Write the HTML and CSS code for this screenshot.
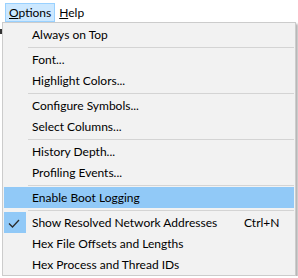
FILE: index.html
```html
<!DOCTYPE html>
<html lang="en">
<head>
  <meta charset="UTF-8">
  <title>Options Menu</title>
  <link rel="stylesheet" href="styles.css">
</head>
<body>
  <div class="menubar">
    <div class="menubar-item open"><u>O</u>ptions</div>
    <div class="menubar-item"><u>H</u>elp</div>
  </div>

  <div class="desk">
    <div class="desk-edge"><span class="edge-mark"></span></div>

    <div class="dropdown">
      <div class="item"><span class="label">Always on Top</span></div>
      <div class="sep"></div>
      <div class="item"><span class="label">Font...</span></div>
      <div class="item"><span class="label">Highlight Colors...</span></div>
      <div class="sep"></div>
      <div class="item"><span class="label">Configure Symbols...</span></div>
      <div class="item"><span class="label">Select Columns...</span></div>
      <div class="sep"></div>
      <div class="item"><span class="label">History Depth...</span></div>
      <div class="item"><span class="label">Profiling Events...</span></div>
      <div class="sep"></div>
      <div class="item hover"><span class="label">Enable Boot Logging</span></div>
      <div class="sep"></div>
      <div class="item checked">
        <span class="check">
          <svg width="22" height="21" viewBox="0 0 22 21">
            <polyline points="5,11.5 8.5,15 15,8" fill="none" stroke="#2b2b2b" stroke-width="1.3"/>
          </svg>
        </span>
        <span class="label">Show Resolved Network Addresses</span>
        <span class="shortcut">Ctrl+N</span>
      </div>
      <div class="item"><span class="label">Hex File Offsets and Lengths</span></div>
      <div class="item"><span class="label">Hex Process and Thread IDs</span></div>
    </div>
  </div>
</body>
</html>
```

FILE: styles.css
```css
body {
  margin: 0;
  background: #fff;
  font-family: Lato, "Noto Sans", sans-serif;
  font-size: 12px;
  color: #000;
}
.menubar {
  display: flex;
  height: 22px;
  padding: 3px 0 0 5px;
  box-sizing: border-box;
}
.menubar-item {
  height: 19px;
  line-height: 17px;
  padding: 0 3px;
  border: 1px solid transparent;
  box-sizing: border-box;
}
.menubar-item.open {
  background: #cce8ff;
  border-color: #99d1ff;
}
.desk {
  display: flex;
}
.desk-edge {
  width: 2px;
}
.edge-mark {
  display: block;
  width: 2px;
  height: 5px;
  margin-top: 7px;
  background: #333;
}
.dropdown {
  width: 294px;
  box-sizing: border-box;
  background: #f2f2f2;
  border: 1px solid #cccccc;
  padding: 1px 1px 0;
  box-shadow: 2px 2px 2px rgba(0, 0, 0, 0.3);
}
.item {
  display: grid;
  grid-template-columns: 28px 212px 1fr;
  height: 21px;
  line-height: 21px;
}
.item .label {
  grid-column: 2;
  white-space: nowrap;
}
.item .shortcut {
  grid-column: 3;
}
.item.hover {
  background: #91c9f7;
}
.check {
  grid-column: 1;
  grid-row: 1;
  width: 22px;
  height: 21px;
  background: #91c9f7;
}
.check svg {
  display: block;
}
.sep {
  height: 4px;
  margin-left: 24px;
  box-sizing: border-box;
  border-top: 2px solid transparent;
}
.sep::after {
  content: "";
  display: block;
  height: 1px;
  background: #d4d4d4;
}
```
